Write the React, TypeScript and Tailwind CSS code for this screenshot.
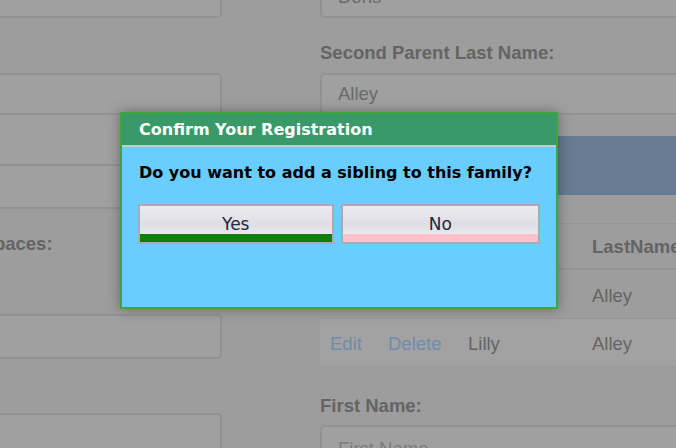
const inputBox = 'flex items-center rounded-[5px] border-2 border-[#929292] bg-[#a0a0a0] px-[16px]'

function LeftColumn() {
  return (
    <div className="flex w-[336px] shrink-0 flex-col">
      <div className={`mt-[-24px] h-[42px] ${inputBox}`} />

      {/* stacked inputs, mostly hidden by the dialog */}
      <div className="mt-[55px] flex flex-col rounded-[5px] border-2 border-[#929292] bg-[#a0a0a0]">
        <div className="h-[40px] border-b-2 border-[#929292]" />
        <div className="h-[51px] border-b-2 border-[#929292]" />
        <div className="h-[41px]" />
      </div>

      <label className="mt-[22px] h-[26px] leading-[26px] font-bold">Number of spaces:</label>

      <div className={`mt-[57px] h-[45px] ${inputBox}`} />
      <div className={`mt-[54px] h-[45px] ${inputBox}`} />
    </div>
  )
}

function RightColumn() {
  const row = 'grid grid-cols-[58px_80px_124px_1fr] items-center'
  return (
    <div className="flex w-[420px] shrink-0 flex-col">
      <div className={`mt-[-24px] h-[42px] text-[#6a6a6a] ${inputBox}`}>Dons</div>

      <label className="mt-[22px] h-[26px] leading-[26px] font-bold">Second Parent Last Name:</label>
      <div className={`mt-[7px] h-[42px] text-[#6a6a6a] ${inputBox}`}>Alley</div>

      <div className="mt-[21px] h-[59px] bg-[#677b91]" />

      <div className="mt-[28px] flex flex-col">
        <div className={`${row} h-[47px] border-t border-b-2 border-[#949494] pt-[2px] font-bold`}>
          <span />
          <span />
          <span className="pl-[10px]">FirstName</span>
          <span className="pl-[10px]">LastName</span>
        </div>
        <div className={`${row} h-[49px] border-b border-[#959595] pt-[3px]`}>
          <span className="pl-[10px] text-[#6f8cab]">Edit</span>
          <span className="pl-[10px] text-[#6f8cab]">Delete</span>
          <span className="pl-[10px]">Dons</span>
          <span className="pl-[10px]">Alley</span>
        </div>
        <div className={`${row} h-[46px] bg-[#a2a2a2] pt-[3px]`}>
          <span className="pl-[10px] text-[#6f8cab]">Edit</span>
          <span className="pl-[10px] text-[#6f8cab]">Delete</span>
          <span className="pl-[10px]">Lilly</span>
          <span className="pl-[10px]">Alley</span>
        </div>
      </div>

      <label className="mt-[28px] h-[26px] leading-[26px] font-bold">First Name:</label>
      <div className={`mt-[6px] h-[42px] items-start pt-[8px] text-[#7c7c7c] ${inputBox}`}>First Name</div>
    </div>
  )
}

function ConfirmDialog() {
  const button =
    'flex h-[40px] items-center justify-center border-2 border-[#a9aab4] bg-linear-to-b from-[#ebebef] via-[#dedee5] to-[#efeff3] text-[17px] leading-[20px] text-[#25253a]'
  return (
    <div className="absolute left-[120px] top-[112px] flex h-[197px] w-[438px] flex-col border-2 border-[#3fa33f] bg-[#69cdfd] font-['DejaVu_Sans',Verdana,sans-serif] shadow-[0_0_12px_rgba(0,0,0,0.35)]">
      <div className="flex h-[33px] shrink-0 items-center border-b-2 border-[#c9c9c9] bg-[#3a9968] px-[17px] text-[16px] leading-[19px] font-bold text-white">
        Confirm Your Registration
      </div>
      <div className="flex flex-col px-[16px] pt-[16px]">
        <p className="ml-px text-[16px] leading-[19px] font-bold text-black">Do you want to add a sibling to this family?</p>
        <div className="mt-[22px] flex gap-[7px]">
          <button className={`w-[196px] shadow-[inset_0_-8px_0_#107f10] ${button}`}>Yes</button>
          <button className={`w-[200px] shadow-[inset_0_-8px_0_#ffc0cb] ${button}`}>No</button>
        </div>
      </div>
    </div>
  )
}

export default function App() {
  return (
    <div className="relative h-[448px] w-[676px] overflow-hidden bg-[#9d9d9d] font-['Liberation_Sans',Arial,sans-serif] text-[18.5px] text-[#646464]">
      <div className="ml-[-114px] flex gap-[98px]">
        <LeftColumn />
        <RightColumn />
      </div>
      <ConfirmDialog />
    </div>
  )
}
